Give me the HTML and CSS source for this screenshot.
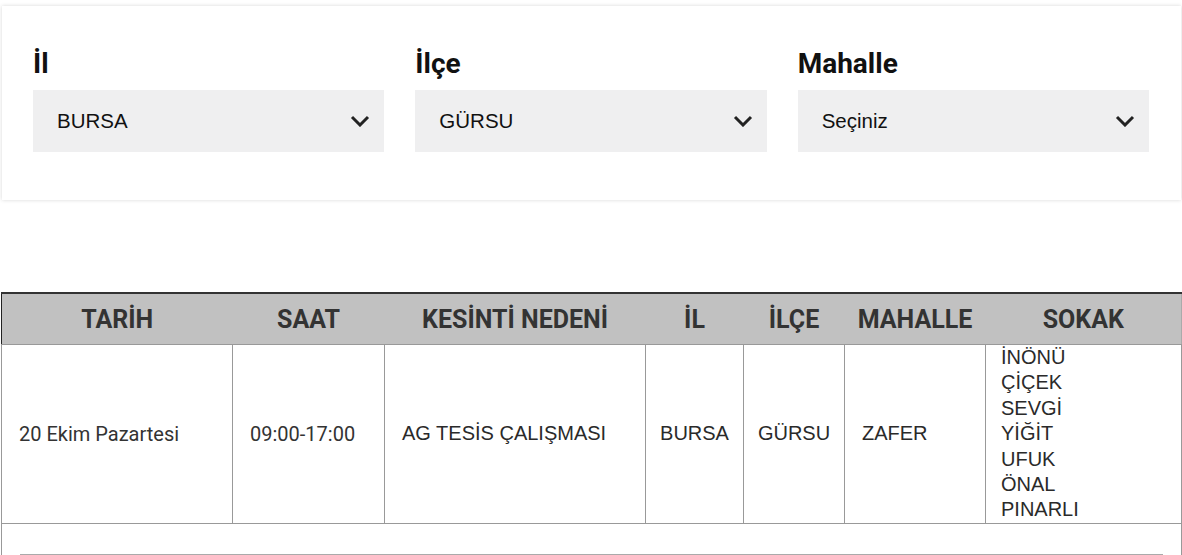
FILE: index.html
```html
<!DOCTYPE html>
<html lang="tr">
<head>
<meta charset="utf-8">
<link rel="stylesheet" href="styles.css">
</head>
<body>
<div class="page">
  <div class="card">
    <div class="field">
      <label class="label">İl</label>
      <div class="select"><span>BURSA</span>
        <svg class="chev" viewBox="0 0 20 12" width="20" height="12"><path d="M2 2 L10 10 L18 2" fill="none" stroke="#222" stroke-width="3"/></svg>
      </div>
    </div>
    <div class="field">
      <label class="label">İlçe</label>
      <div class="select"><span>GÜRSU</span>
        <svg class="chev" viewBox="0 0 20 12" width="20" height="12"><path d="M2 2 L10 10 L18 2" fill="none" stroke="#222" stroke-width="3"/></svg>
      </div>
    </div>
    <div class="field">
      <label class="label">Mahalle</label>
      <div class="select"><span>Seçiniz</span>
        <svg class="chev" viewBox="0 0 20 12" width="20" height="12"><path d="M2 2 L10 10 L18 2" fill="none" stroke="#222" stroke-width="3"/></svg>
      </div>
    </div>
  </div>

  <table class="tbl">
    <colgroup>
      <col class="c1"><col class="c2"><col class="c3"><col class="c4"><col class="c5"><col class="c6"><col class="c7">
    </colgroup>
    <thead>
      <tr>
        <th>TARİH</th><th>SAAT</th><th>KESİNTİ NEDENİ</th><th>İL</th><th>İLÇE</th><th>MAHALLE</th><th>SOKAK</th>
      </tr>
    </thead>
    <tbody>
      <tr class="row">
        <td class="rb">20 Ekim Pazartesi</td>
        <td class="rb">09:00-17:00</td>
        <td>AG TESİS ÇALIŞMASI</td>
        <td class="center">BURSA</td>
        <td class="center">GÜRSU</td>
        <td>ZAFER</td>
        <td class="streets">İNÖNÜ<br>ÇİÇEK<br>SEVGİ<br>YİĞİT<br>UFUK<br>ÖNAL<br>PINARLI</td>
      </tr>
      <tr class="extra">
        <td colspan="7"><div class="rule"></div></td>
      </tr>
    </tbody>
  </table>
</div>
</body>
</html>
```

FILE: styles.css
```css
html, body {
  margin: 0;
  padding: 0;
  background: #fff;
}
body {
  font-family: "Liberation Sans", Arial, sans-serif;
  color: #222;
}
.page {
  padding: 6px 1px 0 1px;
}
.card {
  margin-left: 1px;
  background: #fff;
  box-shadow: 0 0 4px rgba(0, 0, 0, 0.16);
  padding: 42px 32px 48px 31px;
  display: grid;
  grid-template-columns: 1fr 1fr 1fr;
  column-gap: 31px;
}
.field {
  display: flex;
  flex-direction: column;
}
.label {
  font-family: Roboto, "Liberation Sans", sans-serif;
  font-weight: 700;
  font-size: 28px;
  line-height: 32px;
  color: #111;
  margin-bottom: 10px;
}
.select {
  height: 62px;
  background: #efeff0;
  display: flex;
  align-items: center;
  justify-content: space-between;
  padding: 0 14px 0 24px;
  font-size: 20.5px;
  color: #111;
}
.chev {
  display: block;
}
.tbl {
  margin-top: 92px;
  width: 1180px;
  border-collapse: collapse;
  table-layout: fixed;
  border-top: 2px solid #333;
  border-left: 1px solid #222;
  border-right: 1px solid #aaa;
}
.c1 { width: 231px; }
.c2 { width: 152px; }
.c3 { width: 261px; }
.c4 { width: 98px; }
.c5 { width: 101px; }
.c6 { width: 141px; }
.c7 { width: 196px; }
.tbl th {
  background: #c1c1c1;
  height: 50px;
  padding: 0;
  font-family: Roboto, "Liberation Sans", sans-serif;
  font-weight: 700;
  font-size: 25px;
  color: #333;
  text-align: center;
  border-bottom: 1px solid #999;
}
.tbl td {
  font-size: 20px;
  color: #2a2a2a;
  padding: 0 10px 0 17px;
  border: 1px solid #999;
  vertical-align: middle;
  text-align: left;
}
.tbl td.rb {
  font-family: Roboto, "Liberation Sans", sans-serif;
  color: #333;
}
.tbl td.center {
  text-align: center;
  padding: 0;
}
.tbl td.streets {
  line-height: 25.4px;
  padding: 0 8px 0 15px;
}
.row td {
  height: 172px;
}
.extra td {
  border-bottom: none;
  padding: 30px 18px 0 18px;
  height: 10px;
  vertical-align: top;
}
.rule {
  border-top: 1px solid #aaa;
}
```
